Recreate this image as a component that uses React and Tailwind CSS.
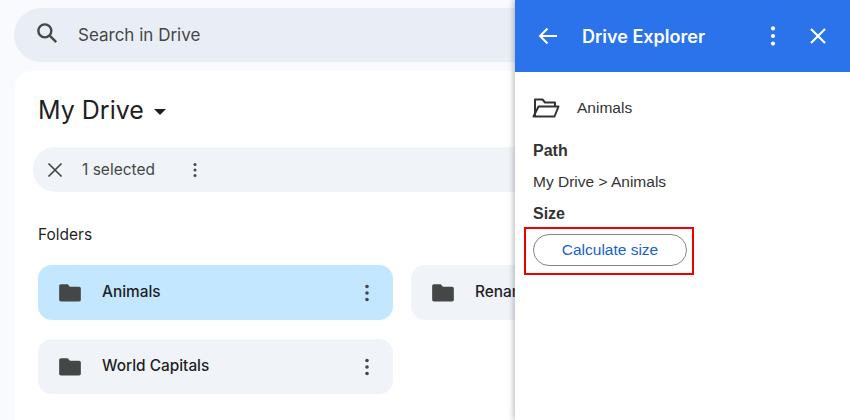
import React from "react";

const Dots = ({ className = "", fill = "#444746" }) => (
  <svg className={className} width="24" height="24" viewBox="0 0 24 24" fill={fill}>
    <circle cx="12" cy="5.500" r="1.800" />
    <circle cx="12" cy="12" r="1.800" />
    <circle cx="12" cy="18.500" r="1.800" />
  </svg>
);

const Folder = () => (
  <svg width="24" height="24" viewBox="0 0 24 24" fill="#444746" className="shrink-0 w-[26px] h-[26px]">
    <path d="M3.6 4h6.2l2.2 2.2h8.4c.9 0 1.6.7 1.6 1.6v10.4c0 .9-.7 1.6-1.6 1.6H3.6c-.9 0-1.6-.7-1.6-1.6V5.6C2 4.7 2.7 4 3.6 4z" />
  </svg>
);

const Card = ({ name, selected, clip }) => (
  <div
    className={`h-[55px] rounded-[14px] flex items-center pl-[19px] w-[355px] shrink-0 ${
      clip ? "" : "pr-[14px]"
    } ${selected ? "bg-[#c2e7ff]" : "bg-[#f0f4f9]"}`}
  >
    <Folder />
    <span className="ml-[19px] flex-1 text-[15.400px] leading-5 -mt-[1px] font-medium text-[#1f1f1f] whitespace-nowrap font-['Inter',sans-serif]">
      {name}
    </span>
    {!clip && <Dots />}
  </div>
);

export default function App() {
  return (
    <div className="w-[850px] h-[420px] flex overflow-hidden bg-[#f8fafd] font-['Inter',sans-serif]">
      <div className="w-[515px] shrink-0 overflow-hidden pt-2 pl-[14px]">
        <div className="w-[560px] h-[54px] rounded-l-[27px] bg-[#e9eef6] flex items-center pl-5 text-[#444746]">
          <svg width="26" height="26" viewBox="0 0 24 24" fill="none" stroke="#444746" strokeWidth="2.2" className="-mt-1">
            <circle cx="10" cy="10" r="6" />
            <path d="M14.5 14.5 20.5 20.5" />
          </svg>
          <span className="ml-[18px] text-[17px] mt-[1px]">Search in Drive</span>
        </div>
        <div className="mt-[9px] ml-px w-[560px] h-[360px] bg-white rounded-tl-[16px] pl-[23px] pt-[22px]">
          <div className="flex items-center h-9 text-[#1f1f1f]">
            <span className="text-[25px]">My Drive</span>
            <svg width="12" height="6" viewBox="0 0 12 6" fill="#1f1f1f" className="ml-[10px] mt-0.5">
              <path d="M0 0h12L6 6z" />
            </svg>
          </div>
          <div className="-ml-[5px] mt-[18px] h-[45px] w-[540px] rounded-l-[22px] bg-[#f0f4f9] flex items-center pl-[12px] text-[#444746]">
            <svg width="20" height="20" viewBox="0 0 20 20" fill="none" stroke="#444746" strokeWidth="1.7">
              <path d="M3.500 3.500l13 13M16.500 3.500l-13 13" />
            </svg>
            <span className="ml-[17px] text-[15.500px]">1 selected</span>
            <Dots className="ml-[30px] w-[20px] h-[20px]" />
          </div>
          <div className="mt-[33px] text-[15.500px] leading-5 text-[#1f1f1f]">Folders</div>
          <div className="mt-[20px] flex gap-[18px]">
            <Card name="Animals" selected />
            <Card name="Renamed" clip />
          </div>
          <div className="mt-[19px]">
            <Card name="World Capitals" />
          </div>
        </div>
      </div>
      <div className="relative w-[335px] shrink-0 bg-white shadow-[-2px_0_5px_rgba(60,64,67,0.3)]">
        <div className="h-[72px] bg-[#2a73ea] flex items-center pl-[21px] pr-[20px] text-white">
          <svg width="24" height="24" viewBox="0 0 24 24" fill="none" stroke="#fff" strokeWidth="2">
            <path d="M21 12H4M11.500 4.500 4 12l7.500 7.500" />
          </svg>
          <span className="ml-[22px] flex-1 text-[18px] font-semibold">Drive Explorer</span>
          <Dots fill="#fff" className="w-[28px] h-[28px] -mr-[2px]" />
          <svg width="24" height="24" viewBox="0 0 24 24" fill="none" stroke="#fff" strokeWidth="2.2" className="ml-[21px]">
            <path d="M5 5l14 14M19 5 5 19" />
          </svg>
        </div>
        <div className="pl-[18px] font-['Liberation_Sans',sans-serif] text-[#333333]">
          <div className="flex items-center h-[24px] mt-[24px]">
            <svg width="28" height="24" viewBox="0 0 28 24" fill="none" stroke="#333" strokeWidth="2" strokeLinejoin="round" className="-ml-[1px]">
              <path d="M3 20V3.500h7.500l2.500 3H23V10" />
              <path d="M1.500 20.500 6.500 10.500H26.500l-4 10z" />
            </svg>
            <span className="ml-[17px] text-[15.500px] leading-5">Animals</span>
          </div>
          <div className="mt-[21px] text-[16px] leading-5 font-bold">Path</div>
          <div className="mt-[11px] text-[15.500px] leading-5">My Drive &gt; Animals</div>
          <div className="mt-[12px] text-[16px] leading-5 font-bold">Size</div>
          <div className="mt-[10px] w-[154px] h-[32px] rounded-full border border-[#80868b] flex items-center justify-center text-[15.500px] text-[#1a5fd0]">
            Calculate size
          </div>
        </div>
        <div className="absolute left-[9px] top-[227px] w-[170px] h-[48px] border-2 border-[#f00000]" />
      </div>
    </div>
  );
}
